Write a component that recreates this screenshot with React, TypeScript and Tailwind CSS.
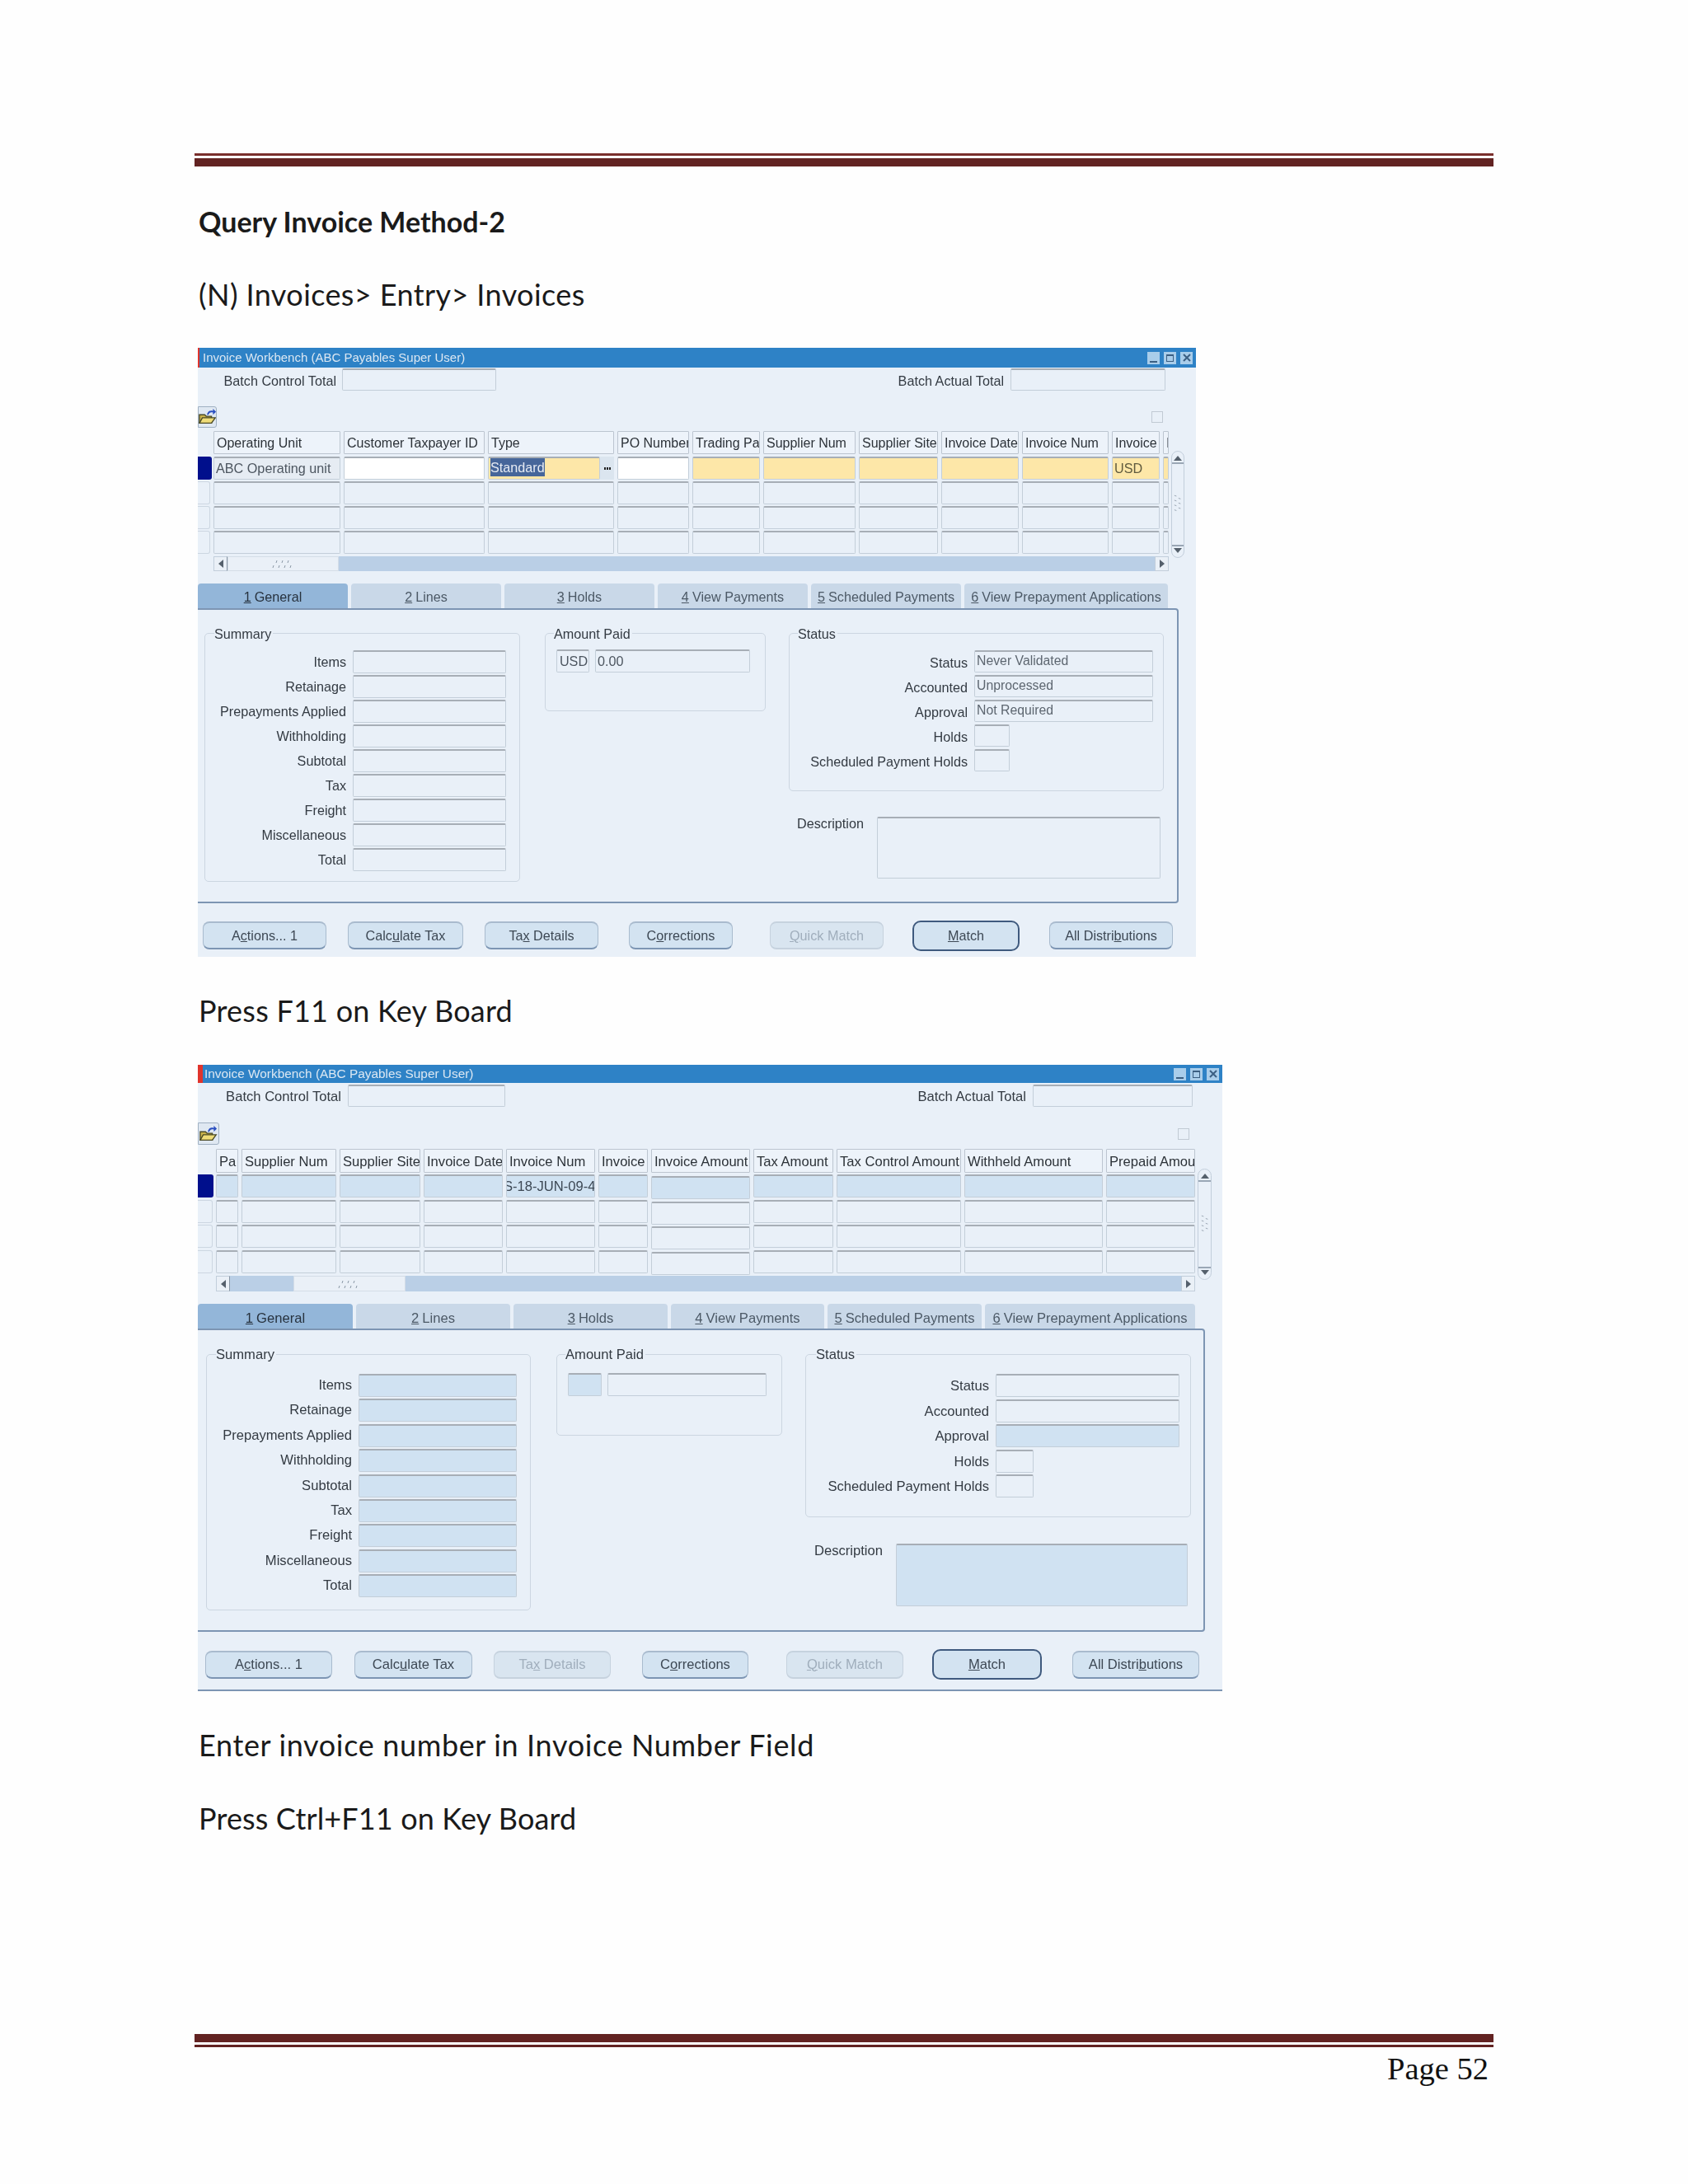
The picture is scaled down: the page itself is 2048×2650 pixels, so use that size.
import type { ReactNode } from 'react'

const field = 'border border-[#c3ced9] border-t-2 border-t-[#a7aeb6] rounded-[2px] overflow-hidden whitespace-nowrap pl-[2px]'
const header = 'h-full border border-[#bcc5d0] bg-[#edf3fa] rounded-[1px] overflow-hidden whitespace-nowrap pl-[3px] pt-[2px] text-[#2c3238] flex items-center'

function Folder() {
  return (
    <svg viewBox="0 0 24 24" className="w-[22px] h-[22px] shrink-0">
      <path d="M1 20 L1 9 L8 9 L10 11 L17 11 L17 20 Z" fill="#c9b24a" stroke="#4b4a26" strokeWidth="1.5" />
      <path d="M1 20 L5 13 L22 13 L17 20 Z" fill="#efdc78" stroke="#4b4a26" strokeWidth="1.5" />
      <path d="M11 9 C12 4 16 3 19 4 L19 1 L23 5 L19 9 L19 6 C16 5 14 6 13 9 Z" fill="#2a4fc0" />
    </svg>
  )
}

function WinButtons() {
  const box = 'w-[15px] h-[15px] bg-[#a9cdea]'
  return (
    <div className="flex gap-[5px] mr-[4px]">
      <div className={`${box} flex items-end justify-center pb-[2px]`}>
        <div className="w-[9px] h-[2px] bg-[#3b5f82]" />
      </div>
      <div className={`${box} flex items-center justify-center`}>
        <div className="w-[9px] h-[9px] border border-t-2 border-[#3b5f82]" />
      </div>
      <div className={`${box} flex items-center justify-center`}>
        <svg viewBox="0 0 10 10" className="w-[10px] h-[10px]">
          <path d="M1 1 L9 9 M9 1 L1 9" stroke="#3b5f82" strokeWidth="2" />
        </svg>
      </div>
    </div>
  )
}

function Grip({ vertical }: { vertical?: boolean }) {
  return (
    <svg viewBox="0 0 30 12" className={vertical ? 'w-[26px] h-[10px] shrink-0 rotate-90' : 'w-[30px] h-[12px]'}>
      <path d="M6 5 L7 2 M13 5 L14 2 M20 5 L21 2 M2 11 L3 8 M9 11 L10 8 M16 11 L17 8 M23 11 L24 8" stroke="#8b98a6" strokeWidth="1" />
    </svg>
  )
}

function VScroll({ className }: { className: string }) {
  return (
    <div className={`${className} shrink-0 rounded-full border border-[#c2cedb] bg-[#e9f0f8] flex flex-col items-center justify-between py-[5px]`}>
      <div className="w-full flex flex-col items-center border-b-2 border-[#9aa7b5] pb-[2px]">
        <div className="w-0 h-0 border-x-[5px] border-x-transparent border-b-[6px] border-b-[#55606c]" />
      </div>
      <Grip vertical />
      <div className="w-full flex flex-col items-center border-t-2 border-[#9aa7b5] pt-[2px]">
        <div className="w-0 h-0 border-x-[5px] border-x-transparent border-t-[6px] border-t-[#55606c]" />
      </div>
    </div>
  )
}

function HScroll({ thumb, before }: { thumb: string; before: string }) {
  return (
    <div className="h-full flex bg-[#bacfe6]">
      <div className="w-[17px] bg-[#eaf0f7] border border-[#c2cedb] border-r-[#8a97a6] flex items-center justify-center">
        <div className="w-0 h-0 border-y-[5px] border-y-transparent border-r-[6px] border-r-[#55606c]" />
      </div>
      <div className={before} />
      <div className={`${thumb} bg-[#eaf0f7] border border-[#d4dde7] flex items-center justify-center`}>
        <Grip />
      </div>
      <div className="flex-1" />
      <div className="w-[17px] bg-[#eaf0f7] border border-[#c2cedb] flex items-center justify-center">
        <div className="w-0 h-0 border-y-[5px] border-y-transparent border-l-[6px] border-l-[#55606c]" />
      </div>
    </div>
  )
}

function Tab({ width, active, n, label, extra }: { width: string; active?: boolean; n: string; label: string; extra: string }) {
  return (
    <div
      className={`${width} ${extra} h-full rounded-t-[4px] flex items-center justify-center gap-[4px] whitespace-nowrap ${
        active ? 'bg-[#93b6d9] text-[#27323e]' : 'bg-[#c9d8e8] text-[#4c5966]'
      }`}
    >
      <u>{n}</u>
      <span>{label}</span>
    </div>
  )
}

function Group({ className, title, left, children }: { className: string; title: string; left: string; children: ReactNode }) {
  return (
    <div className={`${className} relative shrink-0 border border-[#ccd6e1] rounded-[5px]`}>
      <div className={`absolute -top-[10px] ${left} h-[20px] leading-[20px] bg-[#e9f0f8] pr-[2px] text-[#333a42]`}>{title}</div>
      {children}
    </div>
  )
}

function Btn({ className, dim, children }: { className: string; dim?: boolean; children: ReactNode }) {
  return (
    <div
      className={`${className} shrink-0 flex items-center justify-center rounded-[8px] border border-t-2 border-b-2 whitespace-nowrap ${
        dim
          ? 'bg-[#d9e5f0] border-[#c6d2de] text-[#a0aebc]'
          : 'bg-[#d3e3f1] border-[#a9bbce] border-b-[#7c95b3] text-[#3d4854]'
      }`}
    >
      <span>{children}</span>
    </div>
  )
}

const summaryLabels = ['Items', 'Retainage', 'Prepayments Applied', 'Withholding', 'Subtotal', 'Tax', 'Freight', 'Miscellaneous', 'Total']

function FirstWindow() {
  const cols = ['w-[154px]', 'w-[171px]', 'w-[153px]', 'w-[87px]', 'w-[82px]', 'w-[112px]', 'w-[96px]', 'w-[94px]', 'w-[105px]', 'w-[58px]', 'w-[7px]']
  const heads = ['Operating Unit', 'Customer Taxpayer ID', 'Type', 'PO Number', 'Trading Pa', 'Supplier Num', 'Supplier Site', 'Invoice Date', 'Invoice Num', 'Invoice', 'I']

  return (
    <div className="w-[1211px] h-[739px] bg-[#e9f0f8] text-[16.2px] leading-[18px] font-['Liberation_Sans',sans-serif] text-[#333a42] ml-[4px] flex flex-col blur-[0.4px]">
      <div className="h-[24px] shrink-0 bg-[#2e82c6] border-l-2 border-[#e0342c] flex items-center justify-between pl-[4px] text-[15px] text-[#dbe7f2]">
        <span>Invoice Workbench (ABC Payables Super User)</span>
        <WinButtons />
      </div>

      <div className="flex items-center mt-[1px] h-[27px]">
        <div className="w-[168px] text-right pt-[2px] whitespace-nowrap">Batch Control Total</div>
        <div className={`${field} w-[187px] h-full ml-[7px]`} />
        <div className="w-[616px] text-right pt-[2px] whitespace-nowrap">Batch Actual Total</div>
        <div className={`${field} w-[188px] h-full ml-[8px]`} />
      </div>

      <div className="flex items-center justify-between mt-[19px] h-[26px] pr-[40px]">
        <div className="w-[23px] h-full bg-[#dfe8f2] border border-[#9fb0c2] rounded-r-[3px] flex items-center justify-center overflow-hidden">
          <Folder />
        </div>
        <div className="w-[14px] h-[14px] border border-[#c1cad4]" />
      </div>

      <div className="flex mt-[4px]">
        <div className="w-[1178px] flex flex-col">
          <div className="flex gap-[4px] h-[28px] pl-[19px] text-[16px]">
            {cols.map((c, i) => (
              <div key={heads[i]} className={c}>
                <div className={header}>{heads[i]}</div>
              </div>
            ))}
          </div>

          <div className="flex flex-col gap-[2px] mt-[3px]">
            <div className="flex h-[28px]">
              <div className="w-[17px] mr-[2px] bg-[#000f8c] rounded-r-[3px]" />
              <div className={`${field} w-[154px] bg-[#e6ecf3] text-[#4d5660] leading-[24px]`}>ABC Operating unit</div>
              <div className={`${field} w-[171px] ml-[4px] bg-white`} />
              <div className={`${field} w-[136px] ml-[4px] bg-[#fde7a8] pl-[1px] leading-[22px]`}>
                <span className="bg-[#46669a] text-[#e6ebf3] inline-block h-[22px]">Standard</span>
              </div>
              <div className="w-[17px] bg-[#dbe5ef] flex items-center justify-center gap-[1px]">
                <div className="w-[2px] h-[3px] bg-[#222]" />
                <div className="w-[2px] h-[3px] bg-[#222]" />
                <div className="w-[2px] h-[3px] bg-[#222]" />
              </div>
              <div className={`${field} w-[87px] ml-[4px] bg-white`} />
              <div className={`${field} w-[82px] ml-[4px] bg-[#fde7a8]`} />
              <div className={`${field} w-[112px] ml-[4px] bg-[#fde7a8]`} />
              <div className={`${field} w-[96px] ml-[4px] bg-[#fde7a8]`} />
              <div className={`${field} w-[94px] ml-[4px] bg-[#fde7a8]`} />
              <div className={`${field} w-[105px] ml-[4px] bg-[#fde7a8]`} />
              <div className={`${field} w-[58px] ml-[4px] bg-[#fde7a8] text-[#5f5a3e] leading-[24px]`}>USD</div>
              <div className={`${field} w-[7px] ml-[4px] bg-[#fde7a8]`} />
            </div>
            {[0, 1, 2].map((r) => (
              <div key={r} className="flex h-[28px] gap-[4px]">
                <div className="w-[15px] border-y border-r border-[#ccd6e1] rounded-r-[3px]" />
                {cols.map((c, i) => (
                  <div key={heads[i]} className={`${field} ${c}`} />
                ))}
              </div>
            ))}
          </div>

          <div className="h-[18px] ml-[19px] mt-[3px]">
            <HScroll thumb="w-[135px]" before="w-0" />
          </div>
        </div>
        <VScroll className="w-[16px] h-[130px] mt-[24px] ml-[3px]" />
      </div>

      <div className="flex gap-[4px] h-[30px] mt-[15px]">
        <Tab width="w-[182px]" extra="pt-[2px]" active n="1" label="General" />
        <Tab width="w-[182px]" extra="pt-[2px]" n="2" label="Lines" />
        <Tab width="w-[182px]" extra="pt-[2px]" n="3" label="Holds" />
        <Tab width="w-[182px]" extra="pt-[2px]" n="4" label="View Payments" />
        <Tab width="w-[182px]" extra="pt-[2px]" n="5" label="Scheduled Payments" />
        <Tab width="w-[247px]" extra="pt-[2px]" n="6" label="View Prepayment Applications" />
      </div>

      <div className="w-[1190px] h-[358px] shrink-0 border-t-2 border-r-2 border-b-2 border-[#7d95b3] rounded-r-[4px] flex items-start pt-[28px] pl-[8px]">
        <Group className="w-[383px] h-[302px] pt-[20px]" title="Summary" left="left-[11px]">
          <div className="flex flex-col gap-[2px]">
            {summaryLabels.map((l) => (
              <div key={l} className="flex items-center h-[28px]">
                <div className="w-[171px] text-right whitespace-nowrap">{l}</div>
                <div className={`${field} w-[186px] h-full ml-[8px]`} />
              </div>
            ))}
          </div>
        </Group>

        <Group className="w-[268px] h-[95px] ml-[30px] pt-[19px] pl-[13px]" title="Amount Paid" left="left-[10px]">
          <div className="flex gap-[7px] h-[28px] text-[#4d5660] leading-[24px]">
            <div className={`${field} w-[40px] text-center pl-0`}>USD</div>
            <div className={`${field} w-[188px]`}>0.00</div>
          </div>
        </Group>

        <div className="flex flex-col ml-[28px]">
          <Group className="w-[455px] h-[192px] pt-[20px]" title="Status" left="left-[10px]">
            <div className="flex flex-col gap-[3px]">
              {[
                ['Status', 'Never Validated', 'w-[217px]'],
                ['Accounted', 'Unprocessed', 'w-[217px]'],
                ['Approval', 'Not Required', 'w-[217px]'],
                ['Holds', '', 'w-[43px]'],
                ['Scheduled Payment Holds', '', 'w-[43px]'],
              ].map(([l, v, w]) => (
                <div key={l} className="flex items-center h-[27px]">
                  <div className="w-[216px] text-right pt-[2px] whitespace-nowrap">{l}</div>
                  <div className={`${field} ${w} h-full ml-[8px] text-[#5d6670] leading-[22px] text-[15.8px]`}>{v}</div>
                </div>
              ))}
            </div>
          </Group>
          <div className="flex mt-[31px] pl-[10px]">
            <div className="w-[97px] -mt-[1px]">Description</div>
            <div className={`${field} w-[344px] h-[75px]`} />
          </div>
        </div>
      </div>

      <div className="flex items-center h-[36px] mt-[21px] pl-[6px] text-[16.2px]">
        <Btn className="w-[150px] h-[34px]">A<u>c</u>tions... 1</Btn>
        <Btn className="w-[140px] h-[34px] ml-[26px]">Calc<u>u</u>late Tax</Btn>
        <Btn className="w-[138px] h-[34px] ml-[26px]">Ta<u>x</u> Details</Btn>
        <Btn className="w-[126px] h-[34px] ml-[37px]">C<u>o</u>rrections</Btn>
        <Btn dim className="w-[138px] h-[34px] ml-[45px]"><u>Q</u>uick Match</Btn>
        <div className="w-[130px] h-[37px] ml-[35px] shrink-0 flex items-center justify-center rounded-[10px] border-2 border-[#3f5a7e] bg-[#d3e3f1] text-[#3d4854]">
          <span><u>M</u>atch</span>
        </div>
        <Btn className="w-[150px] h-[34px] ml-[36px]">All Distri<u>b</u>utions</Btn>
      </div>
    </div>
  )
}

function SecondWindow() {
  const cols = ['w-[27px]', 'w-[115px]', 'w-[98px]', 'w-[96px]', 'w-[108px]', 'w-[60px]', 'w-[120px]', 'w-[97px]', 'w-[151px]', 'w-[168px]', 'w-[108px]']
  const heads = ['Pa', 'Supplier Num', 'Supplier Site', 'Invoice Date', 'Invoice Num', 'Invoice', 'Invoice Amount', 'Tax Amount', 'Tax Control Amount', 'Withheld Amount', 'Prepaid Amou']
  const blue = 'bg-[#d0e2f2]'

  return (
    <div className="w-[1243px] h-[760px] bg-[#e9f0f8] text-[16.6px] leading-[18px] font-['Liberation_Sans',sans-serif] text-[#333a42] ml-[4px] flex flex-col border-b-2 border-[#7d95b3] blur-[0.4px]">
      <div className="h-[22px] shrink-0 bg-[#2e82c6] border-l-[6px] border-[#e0342c] flex items-center justify-between pl-[2px] text-[15.4px] text-[#dbe7f2]">
        <span>Invoice Workbench (ABC Payables Super User)</span>
        <WinButtons />
      </div>

      <div className="flex items-center mt-[2px] h-[27px]">
        <div className="w-[174px] text-right pt-[2px] whitespace-nowrap">Batch Control Total</div>
        <div className={`${field} w-[191px] h-full ml-[8px]`} />
        <div className="w-[632px] text-right pt-[2px] whitespace-nowrap">Batch Actual Total</div>
        <div className={`${field} w-[194px] h-full ml-[8px]`} />
      </div>

      <div className="flex items-center justify-between mt-[19px] h-[27px] pr-[40px]">
        <div className="w-[26px] h-full bg-[#dfe8f2] border border-[#9fb0c2] rounded-r-[3px] flex items-center justify-center overflow-hidden">
          <Folder />
        </div>
        <div className="w-[14px] h-[14px] border border-[#c1cad4]" />
      </div>

      <div className="flex mt-[5px]">
        <div className="w-[1210px] flex flex-col">
          <div className="flex gap-[4px] h-[29px] pl-[22px]">
            {cols.map((c, i) => (
              <div key={heads[i]} className={c}>
                <div className={header}>{heads[i]}</div>
              </div>
            ))}
          </div>

          <div className="flex flex-col gap-[2.7px] mt-[2px]">
            {[0, 1, 2, 3].map((r) => (
              <div key={r} className="flex h-[28px] gap-[4px]">
                {r === 0 ? (
                  <div className="w-[19px] -mr-[1px] bg-[#000f8c] rounded-r-[3px]" />
                ) : (
                  <div className="w-[18px] border-y border-r border-[#ccd6e1] rounded-r-[3px]" />
                )}
                {cols.map((c, i) => (
                  <div
                    key={heads[i]}
                    className={`${field} ${c} ${r === 0 ? blue : ''} ${i === 6 ? 'h-[28px] mt-[2px] shrink-0' : ''} leading-[26px] text-[#3d4854]`}
                  >
                    {r === 0 && i === 4 ? <div className="-ml-[6px]">S-18-JUN-09-4</div> : null}
                  </div>
                ))}
              </div>
            ))}
          </div>

          <div className="h-[19px] ml-[22px] mt-[3px]">
            <HScroll thumb="w-[136px]" before="w-[77px]" />
          </div>
        </div>
        <VScroll className="w-[17px] h-[135px] mt-[24px] ml-[3px]" />
      </div>

      <div className="flex gap-[4px] h-[30px] mt-[15px]">
        <Tab width="w-[188px]" extra="pt-[5px]" active n="1" label="General" />
        <Tab width="w-[187px]" extra="pt-[5px]" n="2" label="Lines" />
        <Tab width="w-[187px]" extra="pt-[5px]" n="3" label="Holds" />
        <Tab width="w-[186px]" extra="pt-[5px]" n="4" label="View Payments" />
        <Tab width="w-[187px]" extra="pt-[5px]" n="5" label="Scheduled Payments" />
        <Tab width="w-[255px]" extra="pt-[5px]" n="6" label="View Prepayment Applications" />
      </div>

      <div className="w-[1222px] h-[368px] shrink-0 border-t-2 border-r-2 border-b-2 border-[#7d95b3] rounded-r-[4px] flex items-start pt-[29px] pl-[10px]">
        <Group className="w-[394px] h-[311px] pt-[23px]" title="Summary" left="left-[11px]">
          <div className="flex flex-col gap-[2.4px]">
            {summaryLabels.map((l) => (
              <div key={l} className="flex items-center h-[28px]">
                <div className="w-[176px] text-right whitespace-nowrap">{l}</div>
                <div className={`${field} ${blue} w-[192px] h-full ml-[8px]`} />
              </div>
            ))}
          </div>
        </Group>

        <Group className="w-[274px] h-[99px] ml-[31px] pt-[22px] pl-[13px]" title="Amount Paid" left="left-[10px]">
          <div className="flex gap-[7px] h-[28px]">
            <div className={`${field} ${blue} w-[41px]`} />
            <div className={`${field} w-[193px]`} />
          </div>
        </Group>

        <div className="flex flex-col ml-[28px]">
          <Group className="w-[468px] h-[198px] pt-[23px]" title="Status" left="left-[12px]">
            <div className="flex flex-col gap-[2.6px]">
              {[
                ['Status', 'w-[223px]'],
                ['Accounted', 'w-[223px]'],
                ['Approval', 'w-[223px] bg-[#d0e2f2]'],
                ['Holds', 'w-[46px]'],
                ['Scheduled Payment Holds', 'w-[46px]'],
              ].map(([l, w]) => (
                <div key={l} className="flex items-center h-[28px]">
                  <div className="w-[222px] text-right pt-[2px] whitespace-nowrap">{l}</div>
                  <div className={`${field} ${w} h-full ml-[8px]`} />
                </div>
              ))}
            </div>
          </Group>
          <div className="flex mt-[32px] pl-[11px]">
            <div className="w-[99px]">Description</div>
            <div className={`${field} ${blue} w-[354px] h-[76px]`} />
          </div>
        </div>
      </div>

      <div className="flex items-center h-[37px] mt-[21px] pl-[9px] text-[16.6px]">
        <Btn className="w-[154px] h-[34px]">A<u>c</u>tions... 1</Btn>
        <Btn className="w-[143px] h-[34px] ml-[27px]">Calc<u>u</u>late Tax</Btn>
        <Btn dim className="w-[142px] h-[34px] ml-[26px]">Ta<u>x</u> Details</Btn>
        <Btn className="w-[129px] h-[34px] ml-[38px]">C<u>o</u>rrections</Btn>
        <Btn dim className="w-[142px] h-[34px] ml-[46px]"><u>Q</u>uick Match</Btn>
        <div className="w-[133px] h-[37px] ml-[35px] shrink-0 flex items-center justify-center rounded-[10px] border-2 border-[#3f5a7e] bg-[#d3e3f1] text-[#3d4854]">
          <span><u>M</u>atch</span>
        </div>
        <Btn className="w-[154px] h-[34px] ml-[37px]">All Distri<u>b</u>utions</Btn>
      </div>
    </div>
  )
}

export default function App() {
  const line = "h-[40px] leading-[38px] ml-[5px] text-[#1a1a1a] font-['Lato',sans-serif]"

  return (
    <div className="w-[2048px] h-[2650px] bg-[#fefefe] pl-[236px] pt-[186px] overflow-hidden">
      <div className="w-[1576px]">
        <div className="h-[3px] bg-[#7a2f2c]" />
        <div className="h-[10px] bg-[#622322] mt-[3px]" />
      </div>

      <div className={`${line} mt-[48px] text-[34px] font-bold`}>Query Invoice Method-2</div>
      <div className={`${line} mt-[48px] text-[36px] tracking-[0.4px]`}>(N) Invoices&gt; Entry&gt; Invoices</div>

      <div className="mt-[44px]">
        <FirstWindow />
      </div>

      <div className={`${line} mt-[46px] text-[36px] tracking-[0.23px]`}>Press F11 on Key Board</div>

      <div className="mt-[45px]">
        <SecondWindow />
      </div>

      <div className={`${line} mt-[46px] text-[36px] tracking-[0.65px]`}>Enter invoice number in Invoice Number Field</div>
      <div className={`${line} mt-[49px] text-[36px] tracking-[0.13px]`}>Press Ctrl+F11 on Key Board</div>

      <div className="w-[1576px] mt-[241px]">
        <div className="h-[10px] bg-[#622322]" />
        <div className="h-[3px] bg-[#622322] mt-[3px]" />
        <div className="text-right pr-[6px] mt-[4px] text-[38.5px] leading-[44px] text-[#111] font-['Liberation_Serif',serif]">Page 52</div>
      </div>
    </div>
  )
}
